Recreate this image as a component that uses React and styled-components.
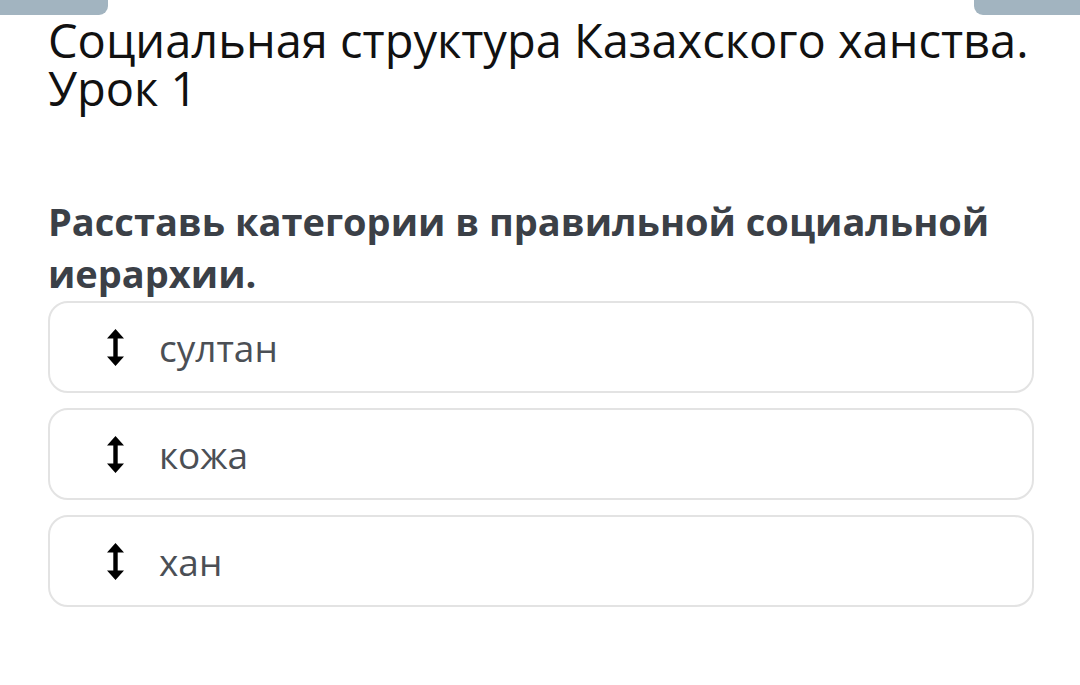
import React from 'react';
import styled, { createGlobalStyle } from 'styled-components';

const Global = createGlobalStyle`
  body {
    margin: 0;
    background: #ffffff;
    font-family: "Open Sans", "Noto Sans", sans-serif;
  }
`;

const Page = styled.div`
  width: 1080px;
  height: 685px;
  overflow: hidden;
  background: #fff;
`;

const TabRow = styled.div`
  display: flex;
  justify-content: space-between;
  height: 15px;
`;

const Tab = styled.div`
  width: ${p => p.w}px;
  height: 15px;
  background: #a2b4c0;
  border-radius: ${p => (p.right ? '0 0 0 9px' : '0 0 9px 0')};
`;

const Content = styled.div`
  padding: 1px 40px 0 48px;
`;

const Title = styled.h1`
  margin: 0;
  font-size: 47px;
  line-height: 48px;
  font-weight: 400;
  color: #111;
`;

const Question = styled.h2`
  margin: 83px 0 0;
  font-size: 38px;
  line-height: 52px;
  font-weight: 700;
  color: #3b4047;
`;

const List = styled.div`
  margin: 2px 6px 0 0;
  display: flex;
  flex-direction: column;
  gap: 15px;
`;

const Card = styled.div`
  height: 92px;
  box-sizing: border-box;
  border: 2px solid #e3e3e3;
  border-radius: 20px;
  display: flex;
  align-items: center;
  padding-left: 57px;
  gap: 35px;
`;

const Label = styled.span`
  font-size: 37px;
  color: #4b4f55;
  line-height: 1;
`;

const MoveIcon = () => (
  <svg width="17" height="37" viewBox="0 0 17 37">
    <path d="M8.5 0 L17 9.5 L10.7 9.5 L10.7 27.5 L17 27.5 L8.5 37 L0 27.5 L6.3 27.5 L6.3 9.5 L0 9.5 Z" fill="#000" />
  </svg>
);

const items = ['султан', 'кожа', 'хан'];

export default function App() {
  return (
    <Page>
      <Global />
      <TabRow>
        <Tab w={108} />
        <Tab w={106} right />
      </TabRow>
      <Content>
        <Title>Социальная структура Казахского ханства. Урок 1</Title>
        <Question>Расставь категории в правильной социальной иерархии.</Question>
        <List>
          {items.map(it => (
            <Card key={it}>
              <MoveIcon />
              <Label>{it}</Label>
            </Card>
          ))}
        </List>
      </Content>
    </Page>
  );
}
